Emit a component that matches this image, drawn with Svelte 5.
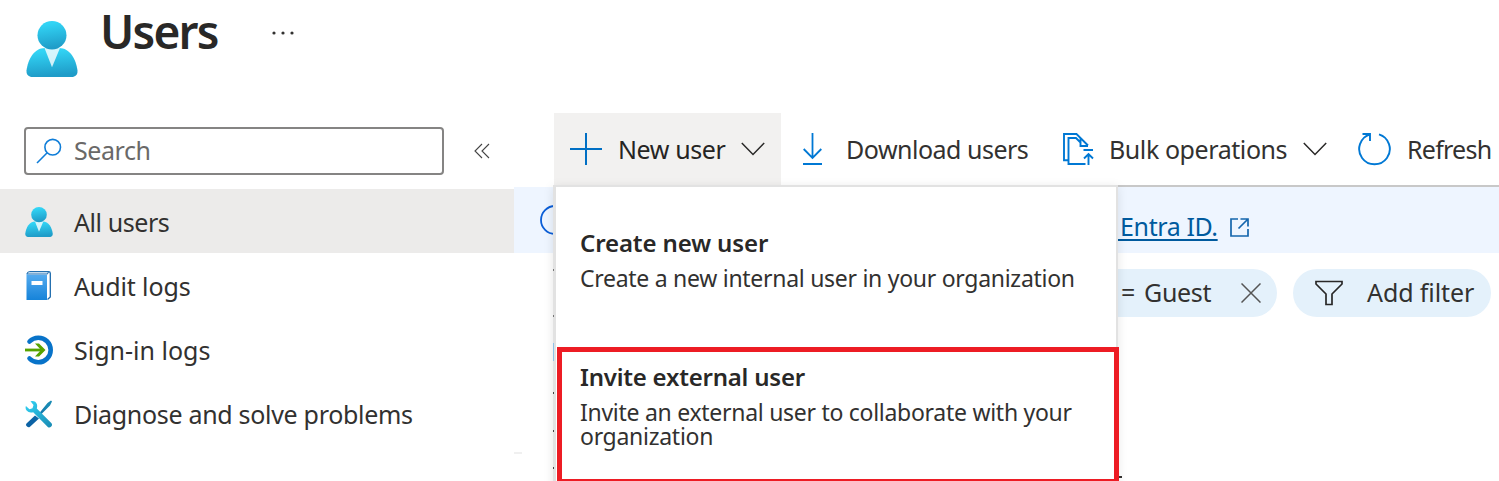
<script>
  const nav = [
    { id: 'user', label: 'All users', ls: -0.42 },
    { id: 'book', label: 'Audit logs', ls: -0.12 },
    { id: 'signin', label: 'Sign-in logs', ls: 0 },
    { id: 'tools', label: 'Diagnose and solve problems', ls: -0.31 }
  ];
  const rowMarks = [
    { y: 82, h: 2, c: '#777' },
    { y: 128, h: 2, c: '#777' },
    { y: 156, h: 18, c: '#8fc3e8' },
    { y: 205, h: 2, c: '#444' },
    { y: 243, h: 2, c: '#444' },
    { y: 280, h: 2, c: '#444' }
  ];
</script>

{#snippet person(id)}
  <svg class="person" viewBox="0 0 52 57" preserveAspectRatio="none">
    <defs>
      <linearGradient id={id + 'b'} x1="0" y1="0" x2="0.15" y2="1"><stop offset="0.15" stop-color="#32d4f5" /><stop offset="1" stop-color="#1f9cc8" /></linearGradient>
    </defs>
    <path d="M47 57Q52 56 51.500 50.500C50 39 44 27.500 33 27.500H19C8 27.500 2 39 .5 50.500Q0 56 5 57Z" fill={'url(#' + id + 'b)'} />
    <path d="M18.500 27.500H34L26 47Z" fill="#fff" opacity=".8" />
    <circle cx="26" cy="14.500" r="14.500" fill={'url(#' + id + 'b)'} />
  </svg>
{/snippet}

{#snippet chevron()}
  <svg class="chev" viewBox="0 0 24 14" width="24" height="14"><path d="M.8 1 12 12.500 23.200 1" fill="none" stroke="#292827" stroke-width="1.500" /></svg>
{/snippet}

<div class="page">
  <header>
    {@render person('h')}
    <h1>Users</h1>
    <svg class="dots" width="24" height="6" viewBox="0 0 24 6" fill="#323130"><circle cx="3" cy="3" r="1.600" /><circle cx="12" cy="3" r="1.600" /><circle cx="21" cy="3" r="1.600" /></svg>
  </header>

  <div class="body">
    <aside>
      <div class="searchrow">
        <div class="search">
          <svg width="26" height="26" viewBox="0 0 26 26" fill="none" stroke="#0f7dd8" stroke-width="1.600"><circle cx="16.700" cy="9.200" r="7.800" /><path d="M11.200 14.800 1 25" /></svg>
          <span>Search</span>
        </div>
        <svg class="collapse" width="16" height="16" viewBox="0 0 16 16" fill="none" stroke="#444" stroke-width="1.100"><path d="M8 1 1 8l7 7M15 1 8 8l7 7" /></svg>
      </div>
      <nav>
        {#each nav as item}
          <div class="item" class:active={item.id === 'user'}>
            <div class="icon">
              {#if item.id === 'user'}
                {@render person('n')}
              {:else if item.id === 'book'}
                <svg class="book" width="26" height="30" viewBox="0 0 26 30">
                  <defs><linearGradient id="bk" x1="0" y1="0" x2="0" y2="1"><stop offset="0" stop-color="#57adf0" /><stop offset="1" stop-color="#1683d9" /></linearGradient></defs>
                  <path d="M3.500.7H22.500Q24.300.7 24.300 2.200V26L21.500 28.500" fill="#fff" stroke="#1b69ac" stroke-width="1.300" />
                  <path d="M1 3Q1 .7 3.500.7H22.500L21.500 3Z" fill="#e8f3fc" stroke="#1b69ac" />
                  <path d="M.5 2Q1 3.800 3 3.800H21V29H.5Z" fill="url(#bk)" />
                  <rect x="5.500" y="10" width="11" height="4" fill="#fff" />
                </svg>
              {:else if item.id === 'signin'}
                <svg width="28" height="30" viewBox="0 0 28 30" fill="none">
                  <path d="M4.500 6.500A12.300 12.300 0 1 1 4.500 23.500" stroke="#0873c9" stroke-width="4.600" stroke-linecap="round" />
                  <path d="M0 15H17" stroke="#57a300" stroke-width="2.800" /><path d="M10 8.500H14L20.500 15 14 21.500H10L16 15Z" fill="#57a300" />
                </svg>
              {:else}
                <svg width="28" height="28" viewBox="0 0 28 28">
                  <defs>
                    <linearGradient id="w" x1="0" y1="0" x2="1" y2="1"><stop offset="0" stop-color="#32d4f5" /><stop offset="1" stop-color="#198ab3" /></linearGradient>
                    <linearGradient id="sd" x1="1" y1="0" x2="0" y2="1"><stop offset="0.200" stop-color="#198ab3" /><stop offset="0.700" stop-color="#0b62a5" /></linearGradient>
                  </defs>
                  <path d="M26 .500 27 1.500 25 5.500 15.500 15 14 13.500 22.500 3ZM10 15.500 14 18.500 5 26.800Q3.500 28 2 26.500 0 25 1.500 23.500Z" fill="url(#sd)" />
                  <path d="M5.500 1.200Q10.500.200 12 4.500 12.400 6.500 11.800 8.500L26.500 23.200Q27.700 25 26.200 26.600 24.500 28.200 22.800 27L8.200 12.200Q4 13.300 1.600 10.600 0 8.500.9 6L4.500 9.200 7.500 8.300 8.500 5Z" fill="url(#w)" />
                </svg>
              {/if}
            </div>
            <span style="letter-spacing:{item.ls}px">{item.label}</span>
          </div>
        {/each}
      </nav>
    </aside>

    <main>
      <div class="toolbar">
        <div class="new">
          <svg width="32" height="32" viewBox="0 0 32 32"><path d="M16 0V32M0 16H32" stroke="#006fc4" stroke-width="2" /></svg>
          <span class="t1">New user</span>
          {@render chevron()}
        </div>
        <svg class="down" width="20" height="32" viewBox="0 0 20 32" fill="none" stroke="#0078d4" stroke-width="1.800"><path d="M9.500 0V25M.7 16 9.500 25 18.300 16M0 31H19" /></svg>
        <span class="t2">Download users</span>
        <svg class="bulk" width="31" height="33" viewBox="0 0 31 33" fill="none" stroke="#0078d4" stroke-width="1.900"><path d="M5 27.200H1V1H13.500L25 12.500M22.500 31H5.500V5H13L18 10M17.500 4.500V13H25M20.500 17H30M25.500 32V21M21 25.500 25.500 21 30 25.500" /></svg>
        <span class="t3">Bulk operations</span>
        {@render chevron()}
        <svg class="refresh" width="34" height="34" viewBox="0 0 34 34" fill="none" stroke="#0078d4" stroke-width="1.900"><path d="M21 2.400A15.300 15.300 0 1 1 12 2.400M4.500 2H12V9" /></svg>
        <span class="t4">Refresh</span>
      </div>
      <div class="banner">
        <svg class="info" width="30" height="30" viewBox="0 0 30 30"><circle cx="15" cy="15" r="14" fill="none" stroke="#0b5ed7" stroke-width="1.800" /></svg>
        <a href="#entra">&nbsp;Entra ID.</a>
        <svg class="ext" width="19" height="19" viewBox="0 0 19 19" fill="none" stroke="#1566ad" stroke-width="1.700"><path d="M8 1H1V18H18V11M10.500 1H18V8.500M18 1 8.500 10.500" /></svg>
      </div>
      <div class="filters">
        <div class="pill guest">
          <span>= Guest</span>
          <svg width="20" height="20" viewBox="0 0 20 20"><path d="M.5.5 19.500 19.500M19.500.5.5 19.500" stroke="#555" stroke-width="1.500" /></svg>
        </div>
        <div class="pill add">
          <svg width="28" height="26" viewBox="0 0 28 26" fill="none" stroke="#292827" stroke-width="1.700"><path d="M1 1.500H27V4L17 14V24.500H11V14L1 4Z" /></svg>
          <span>Add filter</span>
        </div>
      </div>
      <i class="trace"></i>

      <div class="menu">
        {#each rowMarks as m}
          <i class="mark" style="top:{m.y}px;height:{m.h}px;background:{m.c}"></i>
        {/each}
        <i class="edge"></i>
        <section class="create">
          <h2>Create new user</h2>
          <p>Create a new internal user in your organization</p>
        </section>
        <section class="invite">
          <h2>Invite external user</h2>
          <p>Invite an external user to collaborate with your<br />organization</p>
        </section>
      </div>
    </main>
  </div>
</div>

<style>
  :global(body) { background: #fff; overflow: hidden; }
  .page { width: 1499px; height: 481px; overflow: hidden; font: 25px/34px "Noto Sans", "Open Sans", sans-serif; color: #323130; background: #fff; }
  .page * { box-sizing: border-box; }
  svg { display: block; flex: none; }
  span { white-space: nowrap; }
  header { height: 113px; display: flex; align-items: flex-start; padding: 20px 0 0 26px; }
  header .person { width: 52px; height: 56px; margin-top: 1px; }
  h1 { margin: -21px 0 0 22px; width: 171px; font-size: 46px; line-height: 64px; font-weight: 600; color: #292827; letter-spacing: -1.8px; }
  .dots { margin-top: 10px; }
  .body { display: flex; height: 368px; }
  aside { width: 514px; flex: none; }
  .searchrow { display: flex; align-items: center; height: 76px; padding-left: 24px; }
  .search { width: 420px; height: 48px; border: 2px solid #858483; border-radius: 4px; display: flex; align-items: center; padding-left: 10px; color: #6a6968; }
  .search span { margin: -2px 0 0 12px; letter-spacing: -.45px; }
  .collapse { margin-left: 30px; }
  .item { height: 64px; display: flex; align-items: center; padding: 2px 0 0 25px; }
  .item.active { background: #ecebea; }
  .icon { width: 49px; }
  .icon .person { width: 28px; height: 30px; }
  .book { margin-left: 1px; }
  .trace { display: block; margin-top: 135px; width: 8px; height: 2px; background: #f0f0f0; }
  main { position: relative; flex: 1; min-width: 0; }
  .toolbar { height: 74px; display: flex; align-items: center; border-bottom: 2px solid #c8c8c8; border-image: linear-gradient(to right, #fff 41px, #c8c8c8 41px) 2; border-width: 0 0 2px; padding-left: 40px; }
  .new { width: 227px; height: 72px; background: #f2f1f0; display: flex; align-items: center; padding-left: 16px; color: #252423; }
  .t1 { margin-left: 16px; width: 123px; letter-spacing: -.4px; }
  .down { margin-left: 22px; }
  .t2 { margin-left: 23px; width: 217px; letter-spacing: -.5px; }
  .t3 { margin-left: 15px; width: 194px; letter-spacing: -.42px; }
  .refresh { margin-left: 31px; }
  .t4 { margin-left: 15px; letter-spacing: -.75px; }
  .banner { height: 66px; background: #eef5ff; display: flex; align-items: center; padding-left: 26px; }
  a { color: #005a9e; text-decoration: underline; text-decoration-thickness: 2px; text-underline-offset: 3px; margin-left: 544px; width: 116px; margin-top: 12px; white-space: nowrap; letter-spacing: -.4px; }
  .ext { margin-top: 14px; }
  .filters { display: flex; gap: 16px; padding: 16px 0 0 563px; }
  .pill { height: 48px; border-radius: 24px; background: #e4f1fb; display: flex; align-items: center; }
  .pill span { margin-top: -2px; }
  .guest { width: 200px; padding-left: 44px; }
  .guest span { width: 120px; word-spacing: 3px; letter-spacing: -.35px; }
  .add { width: 198px; padding-left: 22px; }
  .add span { margin-left: 24px; letter-spacing: -.1px; }
  .menu { position: absolute; left: 39px; top: 72px; width: 565px; height: 310px; background: #fff; border: solid #e2e2e2; border-width: 2px 2px 0 3px; box-shadow: 0 2px 10px rgba(0, 0, 0, .1); }
  .mark { position: absolute; left: -3px; width: 1px; }
  .edge { position: absolute; left: 563px; top: 289px; width: 3px; height: 2px; background: #323130; }
  h2 { margin: 0; font-size: 24px; line-height: 34px; font-weight: 600; color: #292827; letter-spacing: -.12px; }
  p { margin: 0; font-size: 23px; line-height: 24px; white-space: nowrap; letter-spacing: -.28px; }
  .create { height: 160px; padding: 39px 0 0 24px; }
  .create p { margin-top: 6px; }
  .invite { width: 562px; height: 134px; margin-left: 1px; border: 5px solid #ed1c24; border-bottom-width: 2px; padding: 8px 0 0 18px; position: relative; }
  .invite h2 { letter-spacing: -.22px; }
  .invite p { margin-top: 6px; }
</style>
